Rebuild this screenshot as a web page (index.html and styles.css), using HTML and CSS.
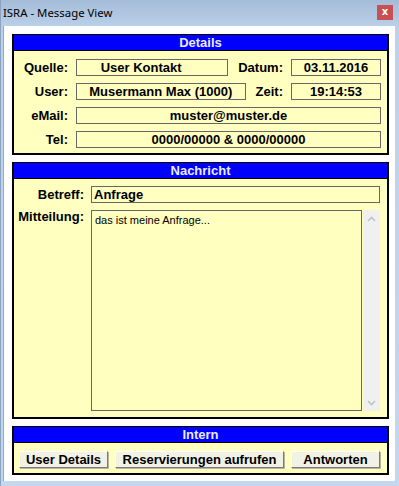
FILE: index.html
```html
<!DOCTYPE html>
<html lang="de">

<head>
  <meta charset="UTF-8">
  <meta name="viewport" content="width=device-width, initial-scale=1.0">
  <title>ISRA - Message View</title>
  <link rel="stylesheet" href="styles.css">
</head>

<body>
  <div class="window">
    <div class="titlebar">
      <span class="title">ISRA - Message View</span>
      <span class="close">x</span>
    </div>

    <div class="client">
      <section class="panel">
        <div class="panel-head">Details</div>
        <div class="details">
          <div class="row">
            <span class="label">Quelle:</span>
            <span class="field wide shifted">User Kontakt</span>
            <span class="label label-2">Datum:</span>
            <span class="field small">03.11.2016</span>
          </div>
          <div class="row">
            <span class="label">User:</span>
            <span class="field wide">Musermann Max (1000)</span>
            <span class="label label-2">Zeit:</span>
            <span class="field small">19:14:53</span>
          </div>
          <div class="row">
            <span class="label">eMail:</span>
            <span class="field wide">muster@muster.de</span>
          </div>
          <div class="row">
            <span class="label">Tel:</span>
            <span class="field wide">0000/00000 &amp; 0000/00000</span>
          </div>
        </div>
      </section>

      <section class="panel">
        <div class="panel-head">Nachricht</div>
        <div class="message">
          <span class="label">Betreff:</span>
          <span class="field subject">Anfrage</span>
          <span class="label label-top">Mitteilung:</span>
          <div class="memo">
            <div class="memo-text">das ist meine Anfrage...</div>
            <div class="scrollbar">
              <svg width="9" height="6" viewBox="0 0 9 6"><path d="M1 5 L4.5 1.5 L8 5" fill="none" stroke="#c2c2c2" stroke-width="1.6"/></svg>
              <svg width="9" height="6" viewBox="0 0 9 6"><path d="M1 1 L4.5 4.5 L8 1" fill="none" stroke="#c2c2c2" stroke-width="1.6"/></svg>
            </div>
          </div>
        </div>
      </section>

      <section class="panel">
        <div class="panel-head">Intern</div>
        <div class="actions">
          <button class="btn btn-user">User Details</button>
          <button class="btn btn-res">Reservierungen aufrufen</button>
          <button class="btn btn-answer">Antworten</button>
        </div>
      </section>
    </div>
  </div>
</body>

</html>
```

FILE: styles.css
```css
body {
  margin: 0;
  background: #bcd1ea;
  font-family: 'Liberation Sans', Arial, sans-serif;
}

.window {
  width: 399px;
  height: 486px;
  box-sizing: border-box;
  padding: 0 4px 5px 2px;
  background: linear-gradient(#a5bcd8, #bdd2ea 30px, #c3d7ee);
  border-left: 1px solid #8aa3c2;
  display: flex;
  flex-direction: column;
}

.titlebar {
  height: 26px;
  flex: none;
  display: flex;
  align-items: center;
  justify-content: space-between;
}

.title {
  font-family: 'Noto Sans', sans-serif;
  font-size: 11.4px;
  color: #000;
  margin-top: -1px;
}

.close {
  width: 16px;
  height: 15px;
  margin-right: 2px;
  margin-top: -2px;
  background: #c75050;
  color: #fff;
  font-family: 'DejaVu Sans', sans-serif;
  font-weight: bold;
  font-size: 10px;
  line-height: 13px;
  text-align: center;
}

.client {
  flex: 1;
  background: #fff;
  border-left: 1px solid #93a9c3;
  padding: 8px 6px 5px 8px;
  display: flex;
  flex-direction: column;
  gap: 7px;
}

.panel {
  border: 2px solid #000;
  background: #ffffc0;
}

.panel-head {
  height: 14px;
  line-height: 14px;
  background: #0000ff;
  border-bottom: 1px solid #000;
  color: #ececff;
  font-weight: bold;
  font-size: 13px;
  text-align: center;
  margin-top: -1px;
  padding-top: 1px;
}

.label {
  font-weight: bold;
  font-size: 13px;
  color: #000;
  text-align: right;
  line-height: 17px;
}

.field {
  height: 17px;
  box-sizing: border-box;
  border: 1px solid #676767;
  font-weight: bold;
  font-size: 13px;
  line-height: 15px;
  color: #000;
  text-align: center;
  white-space: nowrap;
}

/* Details */
.details {
  padding: 8px 6px 5px 4px;
  display: flex;
  flex-direction: column;
  gap: 7px;
}

.row {
  display: flex;
  align-items: center;
}

.row .label {
  width: 50px;
  flex: none;
  margin-right: 8px;
}

.row .wide {
  flex: 1;
}

.row .shifted {
  padding-right: 22px;
}

.row .label-2 {
  width: auto;
  margin-left: 10px;
}

.row .small {
  width: 90px;
  flex: none;
}

/* Nachricht */
.message {
  padding: 7px 7px 6px 4px;
  display: grid;
  grid-template-columns: 66px 1fr;
  column-gap: 7px;
  row-gap: 7px;
}

.subject {
  text-align: left;
  padding-left: 2px;
}

.label-top {
  align-self: start;
  line-height: 14px;
}

.memo {
  height: 201px;
  display: flex;
  gap: 1px;
}

.memo-text {
  flex: 1;
  border: 1px solid #676767;
  padding: 3px 3px;
  font-size: 11px;
  color: #000;
}

.scrollbar {
  width: 17px;
  background: #f0f0f0;
  display: flex;
  flex-direction: column;
  justify-content: space-between;
  align-items: center;
  padding: 6px 0 5px;
  box-sizing: border-box;
}

/* Intern */
.actions {
  padding: 8px 6px 5px 5px;
  display: flex;
  gap: 7px;
}

.btn {
  height: 17px;
  padding: 0;
  box-sizing: border-box;
  background: #f1f1e6;
  border: 1px solid;
  border-color: #fff #7a7a7a #7a7a7a #fff;
  box-shadow: 1px 1px 0 #b5b5a0;
  font-family: 'Liberation Sans', Arial, sans-serif;
  font-weight: bold;
  font-size: 13px;
  line-height: 15px;
  color: #000;
}

.btn-user {
  width: 89px;
}

.btn-res {
  width: 169px;
}

.btn-answer {
  width: 89px;
}
```
